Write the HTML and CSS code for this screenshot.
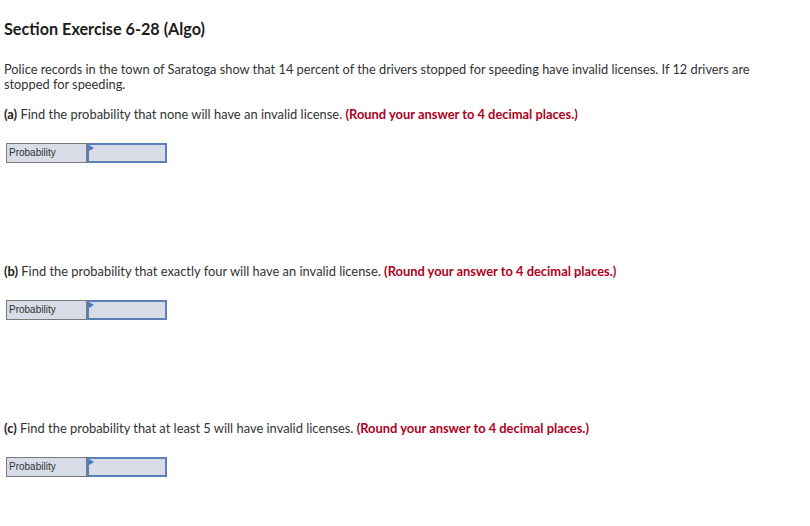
FILE: index.html
```html
<!DOCTYPE html>
<html>
<head>
<meta charset="utf-8">
<link rel="stylesheet" href="styles.css">
</head>
<body>
<div class="page">
  <h1 class="title">Section Exercise 6-28 (Algo)</h1>
  <p class="intro">Police records in the town of Saratoga show that 14 percent of the drivers stopped for speeding have invalid licenses. If 12 drivers are stopped for speeding.</p>

  <section class="part">
    <p class="question"><b>(a)</b> Find the probability that none will have an invalid license. <b class="note">(Round your answer to 4 decimal places.)</b></p>
    <div class="answer"><span class="label">Probability</span><span class="input"></span></div>
  </section>

  <section class="part">
    <p class="question"><b>(b)</b> Find the probability that exactly four will have an invalid license. <b class="note">(Round your answer to 4 decimal places.)</b></p>
    <div class="answer"><span class="label">Probability</span><span class="input"></span></div>
  </section>

  <section class="part">
    <p class="question"><b>(c)</b> Find the probability that at least 5 will have invalid licenses. <b class="note">(Round your answer to 4 decimal places.)</b></p>
    <div class="answer"><span class="label">Probability</span><span class="input"></span></div>
  </section>
</div>
</body>
</html>
```

FILE: styles.css
```css
html, body {
  margin: 0;
  padding: 0;
  background: #fff;
}
.page {
  padding: 19px 0 0 4px;
  width: 750px;
  font-family: "Lato", "Liberation Sans", sans-serif;
  color: #333;
}
.title {
  margin: 0;
  font-size: 16.2px;
  font-weight: 700;
  color: #1c1c1c;
  line-height: 20px;
}
.intro {
  margin: 23px 0 0;
  font-size: 12.8px;
  line-height: 15px;
}
.part {
  display: flex;
  flex-direction: column;
}
.question {
  margin: 15px 0 0;
  font-size: 12.9px;
  line-height: 15px;
}
.question b {
  color: #1c1c1c;
}
.question .note {
  color: #b0001e;
}
.answer {
  display: flex;
  margin: 21px 0 0 2px;
  width: 161px;
  height: 20px;
  border: 1px solid #7a7a7a;
  background: #d8dce6;
  box-sizing: border-box;
}
.label {
  width: 80px;
  border-right: 1px solid #7a7a7a;
  font-family: "Liberation Sans", Arial, sans-serif;
  font-size: 10px;
  line-height: 18px;
  padding-left: 2px;
  color: #333;
  box-sizing: border-box;
}
.input {
  position: relative;
  flex: 1;
  border: 2px solid #5b80b8;
  margin: -1px -1px -1px 0;
  background: #d8dce6;
}
.input::before {
  content: "";
  position: absolute;
  left: 0;
  top: 0;
  border-top: 3px solid transparent;
  border-bottom: 3px solid transparent;
  border-left: 5px solid #4a78c0;
}
.part + .part .question {
  margin-top: 101px;
}
```
